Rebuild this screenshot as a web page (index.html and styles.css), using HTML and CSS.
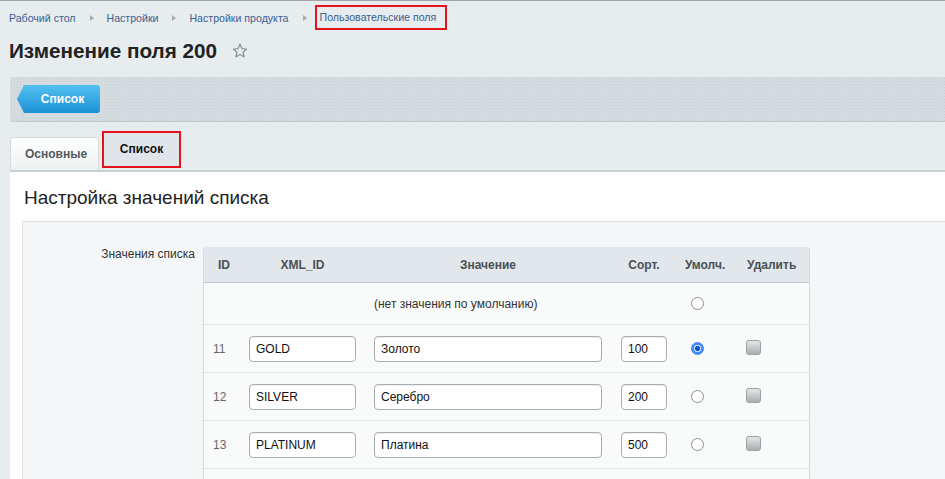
FILE: index.html
```html
<!DOCTYPE html>
<html lang="ru">
<head>
<meta charset="utf-8">
<title>Изменение поля 200</title>
<link rel="stylesheet" href="styles.css">
</head>
<body>
<nav class="crumbs">
  <a class="crumb">Рабочий стол</a><span class="sep"></span>
  <a class="crumb">Настройки</a><span class="sep"></span>
  <a class="crumb">Настройки продукта</a><span class="sep sep-last"></span>
  <a class="crumb crumb-marked">Пользовательские поля</a>
</nav>
<h1 class="title">Изменение поля 200
  <svg class="star" width="16" height="16" viewBox="0 0 16 16"><path d="M8 1.3l1.95 4.3 4.7.5-3.5 3.15 1 4.6L8 11.5l-4.15 2.35 1-4.6L1.35 6.1l4.7-.5z" fill="none" stroke="#8e979c" stroke-width="1.3" stroke-linejoin="round"/></svg>
</h1>
<div class="toolbar">
  <a class="back-btn">Список</a>
</div>
<div class="tabs">
  <div class="tab">Основные</div>
  <div class="tab tab-active">Список</div>
</div>
<section class="panel">
  <h2 class="panel-title">Настройка значений списка</h2>
  <div class="inner">
    <div class="field-label">Значения списка</div>
    <div class="grid-table">
      <div class="row head">
        <div class="c c-id">ID</div>
        <div class="c"><span class="h-xml">XML_ID</span></div>
        <div class="c"><span class="h-val">Значение</span></div>
        <div class="c"><span class="h-sort">Сорт.</span></div>
        <div class="c">Умолч.</div>
        <div class="c h-del">Удалить</div>
      </div>
      <div class="row first">
        <div class="c"></div>
        <div class="c"></div>
        <div class="c c-span">(нет значения по умолчанию)</div>
        <div class="c c-radio"><input type="radio" name="def" class="radio"></div>
        <div class="c"></div>
      </div>
      <div class="row">
        <div class="c c-num">11</div>
        <div class="c"><input class="inp inp-xml" type="text" value="GOLD"></div>
        <div class="c"><input class="inp inp-val" type="text" value="Золото"></div>
        <div class="c"><input class="inp inp-sort" type="text" value="100"></div>
        <div class="c c-radio"><input type="radio" name="def" class="radio" checked></div>
        <div class="c"><input type="checkbox" class="chk"></div>
      </div>
      <div class="row">
        <div class="c c-num">12</div>
        <div class="c"><input class="inp inp-xml" type="text" value="SILVER"></div>
        <div class="c"><input class="inp inp-val" type="text" value="Серебро"></div>
        <div class="c"><input class="inp inp-sort" type="text" value="200"></div>
        <div class="c c-radio"><input type="radio" name="def" class="radio"></div>
        <div class="c"><input type="checkbox" class="chk"></div>
      </div>
      <div class="row">
        <div class="c c-num">13</div>
        <div class="c"><input class="inp inp-xml" type="text" value="PLATINUM"></div>
        <div class="c"><input class="inp inp-val" type="text" value="Платина"></div>
        <div class="c"><input class="inp inp-sort" type="text" value="500"></div>
        <div class="c c-radio"><input type="radio" name="def" class="radio"></div>
        <div class="c"><input type="checkbox" class="chk"></div>
      </div>
      <div class="row last"></div>
    </div>
  </div>
</section>
</body>
</html>
```

FILE: styles.css
```css
html, body {
  margin: 0;
  padding: 0;
}
body {
  background: #e7ecee;
  border-top: 1px solid #9ca4a8;
  font-family: "Liberation Sans", Arial, sans-serif;
  color: #222;
  overflow: hidden;
}

/* breadcrumbs */
.crumbs {
  display: flex;
  align-items: center;
  height: 25px;
  padding: 4px 0 0 9px;
  font-size: 10.6px;
  color: #3d6190;
}
.crumb {
  color: #3d6190;
  text-decoration: none;
  white-space: nowrap;
}
.sep {
  width: 0;
  height: 0;
  border-left: 4px solid #a5adb2;
  border-top: 3px solid transparent;
  border-bottom: 3px solid transparent;
  margin: 0 13px 0 14px;
}
.sep-last {
  margin-right: 8px;
}
.crumb-marked {
  box-sizing: border-box;
  height: 25px;
  line-height: 21px;
  padding: 0 9px 0 3px;
  border: 2px solid #e5131b;
}

/* title */
.title {
  display: flex;
  align-items: center;
  margin: 8px 0 0 9px;
  height: 26px;
  font-size: 20.7px;
  line-height: 26px;
  font-weight: bold;
  color: #222;
}
.star {
  margin-left: 15px;
}

/* toolbar */
.toolbar {
  margin: 13px 0 0 10px;
  height: 45px;
  box-sizing: border-box;
  padding: 8px 0 0 7px;
  border-radius: 4px 0 0 4px;
  background-color: #d5dcdf;
  background-image: radial-gradient(rgba(160,174,180,.22) 0.6px, transparent 0.8px);
  background-size: 3px 3px;
  border-bottom: 1px solid #c2cacd;
}
.back-btn {
  display: flex;
  align-items: center;
  justify-content: center;
  box-sizing: border-box;
  width: 83px;
  height: 28px;
  padding-left: 8px;
  font-size: 12px;
  font-weight: bold;
  color: #fff;
  background: linear-gradient(#52c0f1, #1d92d5);
  border-radius: 0 3px 3px 0;
  clip-path: polygon(7px 0, 100% 0, 100% 100%, 7px 100%, 0 50%);
}

/* tabs */
.tabs {
  display: flex;
  align-items: flex-end;
  height: 39px;
  margin: 9px 0 0 10px;
}
.tab {
  box-sizing: border-box;
  width: 89px;
  height: 33px;
  padding-left: 14px;
  line-height: 32px;
  font-size: 12px;
  font-weight: bold;
  color: #525a5f;
  background: linear-gradient(#ffffff, #eef1f2);
  border: 1px solid #d6dcdf;
  border-bottom: none;
  border-radius: 4px 4px 0 0;
}
.tab-active {
  width: 79px;
  height: 37px;
  margin: 0 0 2px 3px;
  padding: 0;
  line-height: 33px;
  text-align: center;
  color: #111;
  background: #dfe5e8;
  border: 2px solid #e5131b;
  border-radius: 0;
}

/* panel */
.panel {
  margin-left: 10px;
  background: #fff;
  border-top: 2px solid #c8d0d3;
}
.panel-title {
  margin: 0;
  padding: 2px 0 0 14px;
  height: 47px;
  line-height: 47px;
  font-size: 19px;
  font-weight: normal;
  color: #222;
}
.inner {
  display: flex;
  align-items: flex-start;
  gap: 8px;
  margin-left: 12px;
  padding-top: 25px;
  background: #f4f6f7;
  border-top: 1px solid #dbe1e4;
  border-left: 1px solid #dde3e6;
  height: 240px;
}
.field-label {
  width: 172px;
  flex: none;
  text-align: right;
  font-size: 12px;
  line-height: 14px;
  color: #333;
}

/* table */
.grid-table {
  width: 607px;
  box-sizing: border-box;
  background: #f9fafa;
  border-left: 1px solid #d4dbde;
  border-right: 1px solid #d4dbde;
  border-radius: 3px 3px 0 0;
}
.row {
  display: grid;
  grid-template-columns: 45px 125px 247px 64px 61px 63px;
  align-items: center;
  height: 47px;
  border-bottom: 1px solid #e1e6e8;
  font-size: 12px;
}
.row.head {
  height: 35px;
  background: #e1e7ea;
  border-bottom: 1px solid #c3cbcf;
  border-radius: 3px 3px 0 0;
  font-weight: bold;
  color: #4a5055;
}
.row.first {
  height: 41px;
}
.row.last {
  height: 20px;
  border-bottom: none;
}
.c-id {
  padding-left: 14px;
}
.h-xml { display: block; width: 107px; text-align: center; }
.h-val { display: block; width: 228px; text-align: center; }
.h-sort { display: block; width: 46px; text-align: center; }
.h-del { padding-left: 1px; }
.c-span {
  grid-column: 3 / span 2;
  color: #333;
}
.c-num {
  padding-left: 9px;
  color: #666;
}
.c-radio {
  padding-left: 6px;
  display: flex;
  align-items: center;
}

.inp {
  box-sizing: border-box;
  display: block;
  height: 26px;
  margin: 0;
  padding: 0 6px;
  border: 1px solid #a9b0b5;
  border-radius: 4px;
  background: #fff;
  box-shadow: inset 0 1px 1px rgba(0,0,0,.08);
  font-family: "Liberation Sans", Arial, sans-serif;
  font-size: 12px;
  color: #111;
}
.inp-xml { width: 107px; }
.inp-val { width: 228px; }
.inp-sort { width: 46px; }

.radio {
  appearance: none;
  -webkit-appearance: none;
  margin: 0;
  width: 13px;
  height: 13px;
  box-sizing: border-box;
  border: 1px solid #8a8f93;
  border-radius: 50%;
  background: #fff;
}
.radio:checked {
  border-color: #3b7ff0;
  background: radial-gradient(circle, #0c56cf 0 2.3px, #cfe1ff 2.8px 3.4px, #4a8ef5 3.9px);
}
.chk {
  appearance: none;
  -webkit-appearance: none;
  margin: 0;
  width: 15px;
  height: 15px;
  box-sizing: border-box;
  border: 1px solid #9a9fa3;
  border-radius: 3px;
  background: linear-gradient(#e6e8ea, #a9aeb2);
}
```
